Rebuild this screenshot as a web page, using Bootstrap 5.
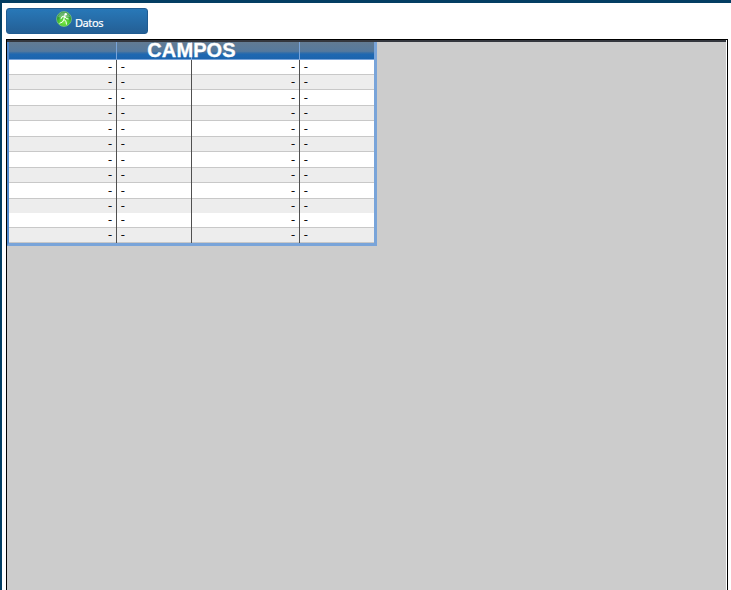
<!DOCTYPE html>
<html lang="es">
<head>
<meta charset="utf-8">
<title>Campos</title>
<link href="https://cdn.jsdelivr.net/npm/bootstrap@5.3.0/dist/css/bootstrap.min.css" rel="stylesheet">
<style>
html,body{height:100%}
body{font-family:"Noto Sans","Open Sans",sans-serif;border-top:3px solid #033e63;border-left:2px solid #033e63;padding:5px 3px 0 4px;background:#fff}
.btn-datos{width:142px;height:26px;background:linear-gradient(#2878b8,#245f95);border:1px solid #1f5b91;border-radius:3px;font-size:11px;line-height:24px;gap:3px;margin-bottom:5px}
.btn-datos span{padding-top:4px;letter-spacing:-.4px;-webkit-text-stroke:.2px #fff}
.btn-datos svg{margin:-4px 0 0 5px}
.canvas-frame{border:1px solid #000;border-bottom:0;background:#ccc;box-shadow:inset -1px 0 #fff}
.top-strip{height:2px;background:#34373e;margin-right:1px}
.campos{width:370px;border:solid #79a4d9;border-width:0 3px 3px 2px;border-left-color:#5089cc}
.campos-head{height:18px;background:linear-gradient(#627b93 0,#55799d 55%,#3b70a5 62%,#1f68b1 72%,#1c64ad 100%);border-bottom:1px solid #79a4d9}
.campos-head i{border-right:1px solid #79a4d9}
.campos-title{font:bold 20px/24px "Liberation Sans",Arial,sans-serif;left:0;right:0;top:-4px;letter-spacing:.1px;-webkit-text-stroke:.3px #fff}
.c-a{width:108px}.c-b{width:75px}
.campos table{width:365px;table-layout:fixed;border-collapse:separate;border-spacing:0;font:11px/12px "Liberation Sans",Arial,sans-serif;color:#000}
.campos td{height:15px;padding:0 4px;border-right:1px solid #505050;box-shadow:inset 0 -1px #c8c8c8;background:#fff;vertical-align:top;-webkit-text-stroke:.3px #000}
.campos td:last-child{border-right:0}
.campos tr:nth-child(even) td{background:#ededed}
.campos tr.tall td{height:16px;padding-top:1px}
.campos tr.short td{height:14px;box-shadow:none}
</style>
</head>
<body class="d-flex flex-column overflow-hidden">
<button class="btn-datos d-flex justify-content-center align-items-center text-white p-0 flex-shrink-0">
<svg width="16" height="16" viewBox="0 0 16 16"><defs><radialGradient id="orb" cy=".7"><stop stop-color="#7be840"/><stop offset=".7" stop-color="#48c832"/><stop offset="1" stop-color="#2a9431"/></radialGradient></defs><circle cx="8" cy="8" r="7.4" fill="url(#orb)" stroke="#a0dc8c" stroke-width=".6"/><path d="M2 6a6.3 6.3 0 0 1 12 0Q8 8 2 6z" fill="#fff" opacity=".3"/><circle cx="9.7" cy="3.2" r="1.2" fill="#fff"/><path d="M8.8 4.8 6 5.8 5 7.8M8.8 5 7.8 8.4 10 10.3l.4 2.9M7.9 8.4 6.5 11 3.8 12.2M9 5.5l1.2 2 2 .4" fill="none" stroke="#fff" stroke-width="1" stroke-linecap="round" stroke-linejoin="round"/></svg>
<span>Datos</span></button>
<main class="canvas-frame flex-grow-1">
<div class="top-strip"></div>
<section class="campos">
<div class="campos-head d-flex position-relative"><i class="c-a"></i><i class="c-a c-b"></i><i class="c-a"></i><div class="campos-title position-absolute text-center text-white">CAMPOS</div></div>
<table><colgroup><col class="c-a"><col class="c-b"><col class="c-a"><col></colgroup><tbody>
<tr><td class="text-end">-</td><td>-</td><td class="text-end">-</td><td>-</td></tr>
<tr><td class="text-end">-</td><td>-</td><td class="text-end">-</td><td>-</td></tr>
<tr class="tall"><td class="text-end">-</td><td>-</td><td class="text-end">-</td><td>-</td></tr>
<tr><td class="text-end">-</td><td>-</td><td class="text-end">-</td><td>-</td></tr>
<tr class="tall"><td class="text-end">-</td><td>-</td><td class="text-end">-</td><td>-</td></tr>
<tr><td class="text-end">-</td><td>-</td><td class="text-end">-</td><td>-</td></tr>
<tr class="tall"><td class="text-end">-</td><td>-</td><td class="text-end">-</td><td>-</td></tr>
<tr><td class="text-end">-</td><td>-</td><td class="text-end">-</td><td>-</td></tr>
<tr class="tall"><td class="text-end">-</td><td>-</td><td class="text-end">-</td><td>-</td></tr>
<tr class="short"><td class="text-end">-</td><td>-</td><td class="text-end">-</td><td>-</td></tr>
<tr><td class="text-end">-</td><td>-</td><td class="text-end">-</td><td>-</td></tr>
<tr><td class="text-end">-</td><td>-</td><td class="text-end">-</td><td>-</td></tr>
</tbody></table>
</section>
</main>
<script src="https://cdn.jsdelivr.net/npm/bootstrap@5.3.0/dist/js/bootstrap.bundle.min.js"></script>
</body>
</html>
